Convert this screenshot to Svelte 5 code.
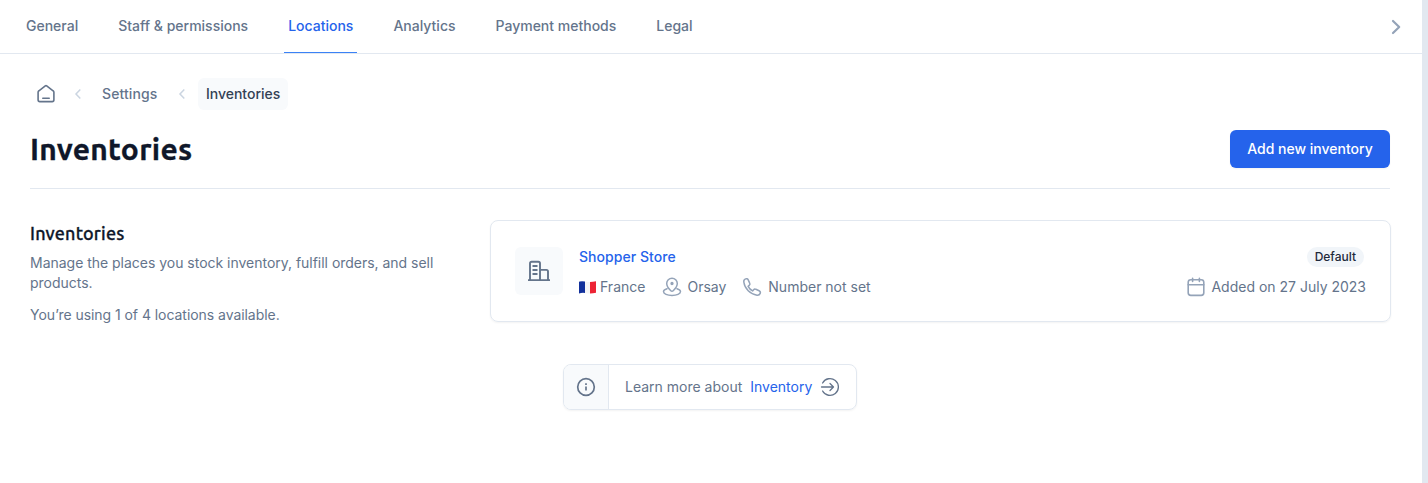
<script>
  const tabs = ['General', 'Staff & permissions', 'Locations', 'Analytics', 'Payment methods', 'Legal'];
  const active = 'Locations';
</script>

<div class="page">
  <main>
    <nav class="tabs">
      {#each tabs as tab}
        <span class="tab" class:active={tab === active}>{tab}</span>
      {/each}
      <svg class="next" width="24" height="24" viewBox="0 0 24 24" fill="none" stroke="currentColor" stroke-width="2.2" stroke-linecap="round" stroke-linejoin="round"><path d="m9 6 6.200 6L9 18" /></svg>
    </nav>

    <div class="content">
      <nav class="crumbs">
        <svg class="home" width="20" height="20" viewBox="0 0 20 20" fill="none" stroke="currentColor" stroke-width="1.6" stroke-linecap="round" stroke-linejoin="round"><path d="M6.800 14.200h6.400M2.100 8.200v7.600c0 1 .7 1.800 1.700 1.800h12.400c1 0 1.700-.8 1.700-1.800V8.200c0-.6-.3-1.100-.8-1.400L10.700 1.900a1.300 1.300 0 0 0-1.400 0L2.900 6.800c-.5.300-.8.800-.8 1.400Z" /></svg>
        <svg class="sep" width="16" height="16" viewBox="0 0 16 16" fill="none" stroke="currentColor" stroke-width="1.500"><path d="m10.300 3.600-4.300 4.400 4.300 4.400" /></svg>
        <a class="crumb" href="#settings">Settings</a>
        <svg class="sep second" width="16" height="16" viewBox="0 0 16 16" fill="none" stroke="currentColor" stroke-width="1.500"><path d="m10.300 3.600-4.300 4.400 4.300 4.400" /></svg>
        <span class="crumb current">Inventories</span>
      </nav>

      <header>
        <h1>Inventories</h1>
        <button>Add new inventory</button>
      </header>

      <div class="columns">
        <section class="intro">
          <h2>Inventories</h2>
          <p>Manage the places you stock inventory, fulfill orders, and sell products.</p>
          <p class="usage">You’re using 1 of 4 locations available.</p>
        </section>

        <article class="card">
          <div class="thumb">
            <svg width="24" height="24" viewBox="0 0 24 24" fill="none" stroke="currentColor" stroke-width="1.9" stroke-linejoin="round"><path d="M1 21.100h22M3 21V4.400C3 3.400 3.600 2.800 4.600 2.800h6.800c1 0 1.600.6 1.600 1.600V21M13 10.900h6.400c1 0 1.600.6 1.600 1.600V21M5.500 7h5M5.500 11h5M5.500 15h5" /></svg>
          </div>
          <div class="details">
            <div class="line">
              <a href="#store">Shopper Store</a>
              <span class="badge">Default</span>
            </div>
            <div class="line meta">
              <span class="item country">
                <svg width="17" height="13" viewBox="0 0 17 13"><path fill="#12309b" d="M0 1.200Q0 .6 .6 .5 3-.1 6 .5v11.500Q3 11.500 0 12.500Z" /><path fill="#f5f5f5" d="M6 .5q2.500.6 5 .4v11.500q-2.500.2-5-.4Z" /><path fill="#ed2435" d="M11 .9q3 0 6-.6v11.400q-3 .7-6 .7Z" /></svg>
                France
              </span>
              <span class="item city">
                <svg width="20" height="20" viewBox="0 0 20 20" fill="none" stroke="currentColor" stroke-width="1.5" stroke-linecap="round" stroke-linejoin="round"><path d="M5 11.700c-2.200.7-3.500 1.700-3.500 2.900 0 2.300 3.800 3.900 8.500 3.900s8.500-1.600 8.500-3.900c0-1.200-1.300-2.200-3.500-2.900M10 14.200c-.5 0-.9-.2-1.200-.5C6.500 11.500 4.700 9.400 4.700 6.500a5.300 5.300 0 0 1 10.600 0c0 2.900-1.800 5-4.100 7.200-.3.300-.7.500-1.200.5Z" /><circle cx="10" cy="6.500" r=".9" fill="currentColor" /></svg>
                Orsay
              </span>
              <span class="item phone">
                <svg width="20" height="20" viewBox="0 0 20 20" fill="none" stroke="currentColor" stroke-width="1.5" stroke-linejoin="round"><path d="M7.700 6.100 6.200 2.900C5.700 1.800 4.600 1.400 3.500 1.900 2.300 2.400 1.600 3.500 1.800 5c.9 6.700 6.500 12.300 13.200 13.200 1.500.2 2.700-.6 3.200-1.800.4-1.100 0-2.100-1.100-2.600L13.900 12.300c-.8-.4-1.700-.2-2.300.5l-1 1.100c-2-1-3.500-2.500-4.500-4.500l1.100-1c.7-.6.9-1.500.5-2.300Z" /></svg>
                Number not set
              </span>
              <span class="item date">
                <svg width="20" height="20" viewBox="0 0 20 20" fill="none" stroke="currentColor" stroke-width="1.600" stroke-linecap="round"><rect x="2.200" y="2.700" width="15.600" height="15.700" rx="2.600" /><path d="M2.200 7.800h15.600M6.600 1.200v3.300M13.400 1.200v3.300" /></svg>
                Added on 27 July 2023
              </span>
            </div>
          </div>
        </article>
      </div>

      <aside class="help">
        <span class="info">
          <svg width="20" height="20" viewBox="0 0 20 20" fill="none" stroke="currentColor" stroke-width="1.700"><circle cx="10" cy="10" r="8.300" /><path d="M10 9.500v4M10 6.200v1.700" /></svg>
        </span>
        <p>
          Learn more about
          <a href="#inventory">Inventory</a>
          <svg width="20" height="20" viewBox="0 0 20 20" fill="none" stroke="currentColor" stroke-width="1.300" stroke-linecap="round" stroke-linejoin="round"><path d="M2.600 6A8.400 8.400 0 1 1 2.600 14M1.500 10H13.500M10 6.500 13.500 10 10 13.500" /></svg>
        </p>
      </aside>
    </div>
  </main>
</div>

<style>
  :global(body) { margin: 0; background: #fff; }
  .page { box-sizing: border-box; height: 483px; border-right: 6px solid #e2e8f0; background: #fff; color: #64748b; font: 400 14px/20px Inter, sans-serif; overflow: hidden; }
  svg { display: block; flex: none; }
  a { color: #2563eb; text-decoration: none; }
  h1, h2, p { margin: 0; }
  .tabs { box-sizing: border-box; display: flex; gap: 32px; height: 54px; padding: 0 14px 0 22px; border-bottom: 1px solid #e2e8f0; font-weight: 500; }
  .tab { box-sizing: border-box; height: 53px; padding: 16px 4px 0; }
  .tab.active { color: #2563eb; border-bottom: 1px solid #3b82f6; }
  .next { margin: 15px 0 0 auto; color: #94a3b8; }
  .content { padding: 24px 31px 0 30px; }
  .crumbs { display: flex; align-items: center; height: 32px; font-weight: 500; }
  .home { margin-left: 6px; }
  .sep { margin-left: 14px; color: #cbd5e1; }
  .sep.second { margin-left: 8.5px; }
  .crumb { padding: 6px 8px; margin-left: 8px; color: #64748b; }
  .crumb:not(.current) { letter-spacing: .1px; }
  .crumb.current { color: #334155; background: #f8fafc; border-radius: 6px; }
  header { display: flex; align-items: center; justify-content: space-between; height: 38px; margin-right: 1px; padding: 20px 0; border-bottom: 1px solid #e2e8f0; }
  h1, h2 { color: #0f172a; font-family: Ubuntu, "Noto Sans", sans-serif; }
  h1 { font-size: 30px; line-height: 36px; font-weight: 700; letter-spacing: .27px; -webkit-text-stroke: .3px #0f172a; }
  button { box-sizing: border-box; width: 160px; height: 38px; padding: 0; border: 0; border-radius: 6px; background: #2563eb; color: #fff; font: 500 14px/20px Inter, sans-serif; box-shadow: 0 1px 2px #0000000d; }
  .columns { display: flex; align-items: flex-start; margin-top: 31px; }
  .intro { flex: none; width: 436px; padding-right: 24px; letter-spacing: -.02px; }
  h2 { font-size: 18px; line-height: 24px; font-weight: 500; letter-spacing: .17px; -webkit-text-stroke: .3px #0f172a; margin: 1px 0 8px; }
  .usage { margin-top: 12px; letter-spacing: -.05px; }
  .card { box-sizing: border-box; flex: none; display: flex; width: 901px; height: 102px; padding: 26px 24px; border: 1px solid #e2e8f0; border-radius: 8px; box-shadow: 0 1px 2px #0000000d; }
  .thumb { display: grid; place-items: center; width: 48px; height: 48px; border-radius: 6px; background: #f8fafc; }
  .details { flex: 1; margin-left: 16px; }
  .line { display: flex; align-items: center; justify-content: space-between; height: 20px; font-weight: 500; }
  .line > a { letter-spacing: .05px; }
  .badge { padding: 0 8px; margin-right: 2px; border-radius: 10px; background: #f1f5f9; color: #1e293b; font-size: 12px; }
  .meta { justify-content: flex-start; margin-top: 10px; font-weight: 400; }
  .item { display: flex; align-items: center; gap: 6px; }
  .item svg { color: #94a3b8; }
  .country { gap: 4px; }
  .city { margin-left: 16.5px; gap: 5.5px; }
  .phone { margin-left: 16px; }
  .date { margin-left: auto; gap: 5px; }
  .help { box-sizing: border-box; display: flex; width: 294px; height: 46px; margin: 39px auto 0 533px; border: 1px solid #e2e8f0; border-radius: 8px; box-shadow: 0 1px 2px #0000000d; overflow: hidden; }
  .info { display: grid; place-items: center; width: 44px; border-right: 1px solid #e2e8f0; background: #f8fafc; }
  .help p { display: flex; align-items: center; gap: 8px; padding-left: 16px; }
</style>
